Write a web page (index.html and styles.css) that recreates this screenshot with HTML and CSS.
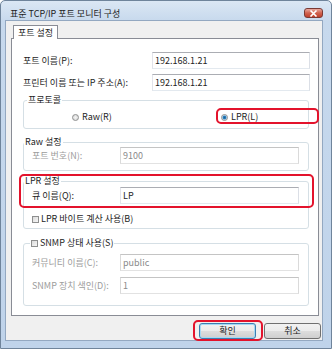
FILE: index.html
```html
<!DOCTYPE html>
<html>

<head>
    <meta charset="utf-8">
    <title>표준 TCP/IP 포트 모니터 구성</title>
    <link rel="stylesheet" href="styles.css">
</head>

<body>
    <div class="window">
        <div class="titlebar">
            <span class="title">표준 TCP/IP 포트 모니터 구성</span>
            <span class="close">
                <svg width="9" height="7" viewBox="0 0 9 7"><path d="M1.5 0.5 L7.5 6.5 M7.5 0.5 L1.5 6.5" stroke="#fff" stroke-width="1.6"/></svg>
            </span>
        </div>
        <div class="client">
            <div class="tabs">
                <div class="tab">포트 설정</div>
            </div>
            <div class="panel">
                <div class="row">
                    <span class="label">포트 이름(P):</span>
                    <div class="field wide">192.168.1.21</div>
                </div>
                <div class="row">
                    <span class="label">프린터 이름 또는 IP 주소(A):</span>
                    <div class="field wide">192.168.1.21</div>
                </div>

                <fieldset class="group protocol">
                    <legend>프로토콜</legend>
                    <div class="options">
                        <span class="option"><i class="radio"></i>Raw(R)</span>
                        <span class="option marked"><i class="radio on"></i>LPR(L)<span class="mark"></span></span>
                    </div>
                </fieldset>

                <fieldset class="group raw">
                    <legend>Raw 설정</legend>
                    <div class="row">
                        <span class="label disabled">포트 번호(N):</span>
                        <div class="field narrow disabled">9100</div>
                    </div>
                </fieldset>

                <fieldset class="group lpr">
                    <legend>LPR 설정</legend>
                    <div class="row">
                        <span class="label">큐 이름(Q):</span>
                        <div class="field narrow">LP</div>
                    </div>
                    <div class="check-row"><i class="checkbox"></i>LPR 바이트 계산 사용(B)</div>
                    <span class="mark lpr-mark"></span>
                </fieldset>

                <fieldset class="group snmp">
                    <legend><i class="checkbox"></i>SNMP 상태 사용(S)</legend>
                    <div class="row">
                        <span class="label disabled">커뮤니티 이름(C):</span>
                        <div class="field narrow disabled">public</div>
                    </div>
                    <div class="row">
                        <span class="label disabled">SNMP 장치 색인(D):</span>
                        <div class="field narrow disabled">1</div>
                    </div>
                </fieldset>
            </div>
            <div class="buttons">
                <button class="btn default">확인<span class="mark"></span></button>
                <button class="btn">취소</button>
            </div>
        </div>
    </div>
</body>

</html>
```

FILE: styles.css
```css
* {
    box-sizing: border-box;
}

body {
    margin: 0;
    background: #fff;
    font-family: "Noto Sans CJK KR", "Noto Sans", sans-serif;
    font-size: 9px;
    line-height: 10px;
    color: #1e1e1e;
}

.window {
    width: 332px;
    height: 349px;
    display: flex;
    flex-direction: column;
    padding: 0 8px 7px 4px;
    border: 1px solid #6f849b;
    border-radius: 5px 5px 0 0;
    background: linear-gradient(#dbe7f4, #c7d9ed 20px, #bfd3ea);
}

.titlebar {
    height: 19px;
    display: flex;
    align-items: flex-start;
    padding-left: 5px;
}

.title {
    margin-top: 8px;
    color: #222;
}

.close {
    margin-left: auto;
    margin-top: 7px;
    width: 19px;
    height: 10px;
    display: flex;
    align-items: center;
    justify-content: center;
    border: 1px solid #7a3a34;
    border-radius: 3px;
    background: linear-gradient(#e9a99f, #d0624f 50%, #c0402c);
}

.client {
    flex: 1;
    display: flex;
    flex-direction: column;
    padding: 4px 1px 0 5px;
    border: 1px solid #93a8c1;
    background: #f0f0f0;
}

.tabs {
    display: flex;
    padding-left: 2px;
}

.tab {
    position: relative;
    z-index: 1;
    height: 14px;
    margin-bottom: -1px;
    padding: 1px 4px 0 4px;
    line-height: 12px;
    border: 1px solid #898c95;
    border-bottom: none;
    background: #fff;
}

.panel {
    margin-right: 2px;
    padding: 13px 8px 9px 11px;
    border: 1px solid #898c95;
    background: #fff;
}

.row {
    display: flex;
    align-items: center;
    height: 17px;
}

.row + .row {
    margin-top: 5px;
}

.label.disabled {
    color: #9c9c9c;
}

.field {
    height: 17px;
    margin-left: auto;
    padding: 0 2px;
    line-height: 15px;
    border: 1px solid;
    border-color: #abadb3 #dbdfe6 #e3e9ef #e2e3ea;
    background: #fff;
}

.field.wide {
    width: 158px;
}

.field.narrow {
    width: 179px;
}

.field.disabled {
    color: #8a8a8a;
    border-color: #c4c4c4 #dadada #e2e2e2 #dadada;
}

/* group boxes */
.group {
    position: relative;
    min-width: 0;
    margin: 0 1px 0 0;
    padding: 0 9px 0 8px;
    border: 1px solid #d5dfe5;
    border-radius: 3px;
}

.group legend {
    padding: 0 1px;
    line-height: 10px;
}

.protocol {
    margin-top: 4px;
    padding: 0;
}

.protocol legend {
    margin-left: 3px;
}

.raw {
    margin-top: 8px;
    padding-bottom: 6px;
}

.raw legend,
.lpr legend {
    margin-left: -8px;
}

.lpr {
    margin-top: 5px;
    padding-top: 1px;
    padding-bottom: 4px;
}

.snmp {
    margin-top: 9px;
    padding-top: 6px;
    padding-bottom: 11px;
}

.snmp legend {
    margin-left: -2px;
}

.snmp .row + .row {
    margin-top: 6px;
}

.options {
    display: grid;
    grid-template-columns: 149px auto;
    padding: 7px 0 6px 48px;
}

.option {
    position: relative;
    display: flex;
    align-items: center;
    height: 10px;
}

.radio {
    width: 7px;
    height: 7px;
    margin-right: 3px;
    border: 1px solid #8e8f8f;
    border-radius: 50%;
    background: radial-gradient(#f4f4f4, #d4d4d4);
}

.radio.on {
    background: radial-gradient(#1b5f94 0, #2c86c6 1.6px, #bcd7ec 2.2px, #e8f1f8);
}

.check-row {
    display: flex;
    align-items: center;
    height: 10px;
    margin-top: 10px;
}

.checkbox {
    display: inline-block;
    vertical-align: -1px;
    width: 7px;
    height: 7px;
    margin-right: 2px;
    border: 1px solid #8e8f8f;
    background: linear-gradient(135deg, #dcdcdc, #f6f6f6);
}

/* red callouts */
.mark {
    position: absolute;
    border: 2px solid #e3132c;
    border-radius: 5px;
    pointer-events: none;
}

.option .mark {
    left: -5px;
    right: -11px;
    top: -4px;
    bottom: -2px;
}

.lpr-mark {
    left: -5px;
    right: -6px;
    top: -12px;
    bottom: 20px;
}

/* buttons */
.buttons {
    display: flex;
    justify-content: flex-end;
    gap: 8px;
    margin-top: 7px;
}

.btn {
    position: relative;
    width: 57px;
    height: 16px;
    padding: 0;
    font-family: inherit;
    font-size: 9px;
    line-height: 14px;
    color: #1e1e1e;
    border: 1px solid #707070;
    border-radius: 3px;
    background: linear-gradient(#f2f2f2, #ebebeb 50%, #dddddd 51%, #cfcfcf);
}

.btn.default {
    border-color: #3c7fb1;
    box-shadow: inset 0 0 0 1px #a6d9f4;
}

.btn .mark {
    left: -7px;
    right: -8px;
    top: -4px;
    bottom: -3px;
}
```
